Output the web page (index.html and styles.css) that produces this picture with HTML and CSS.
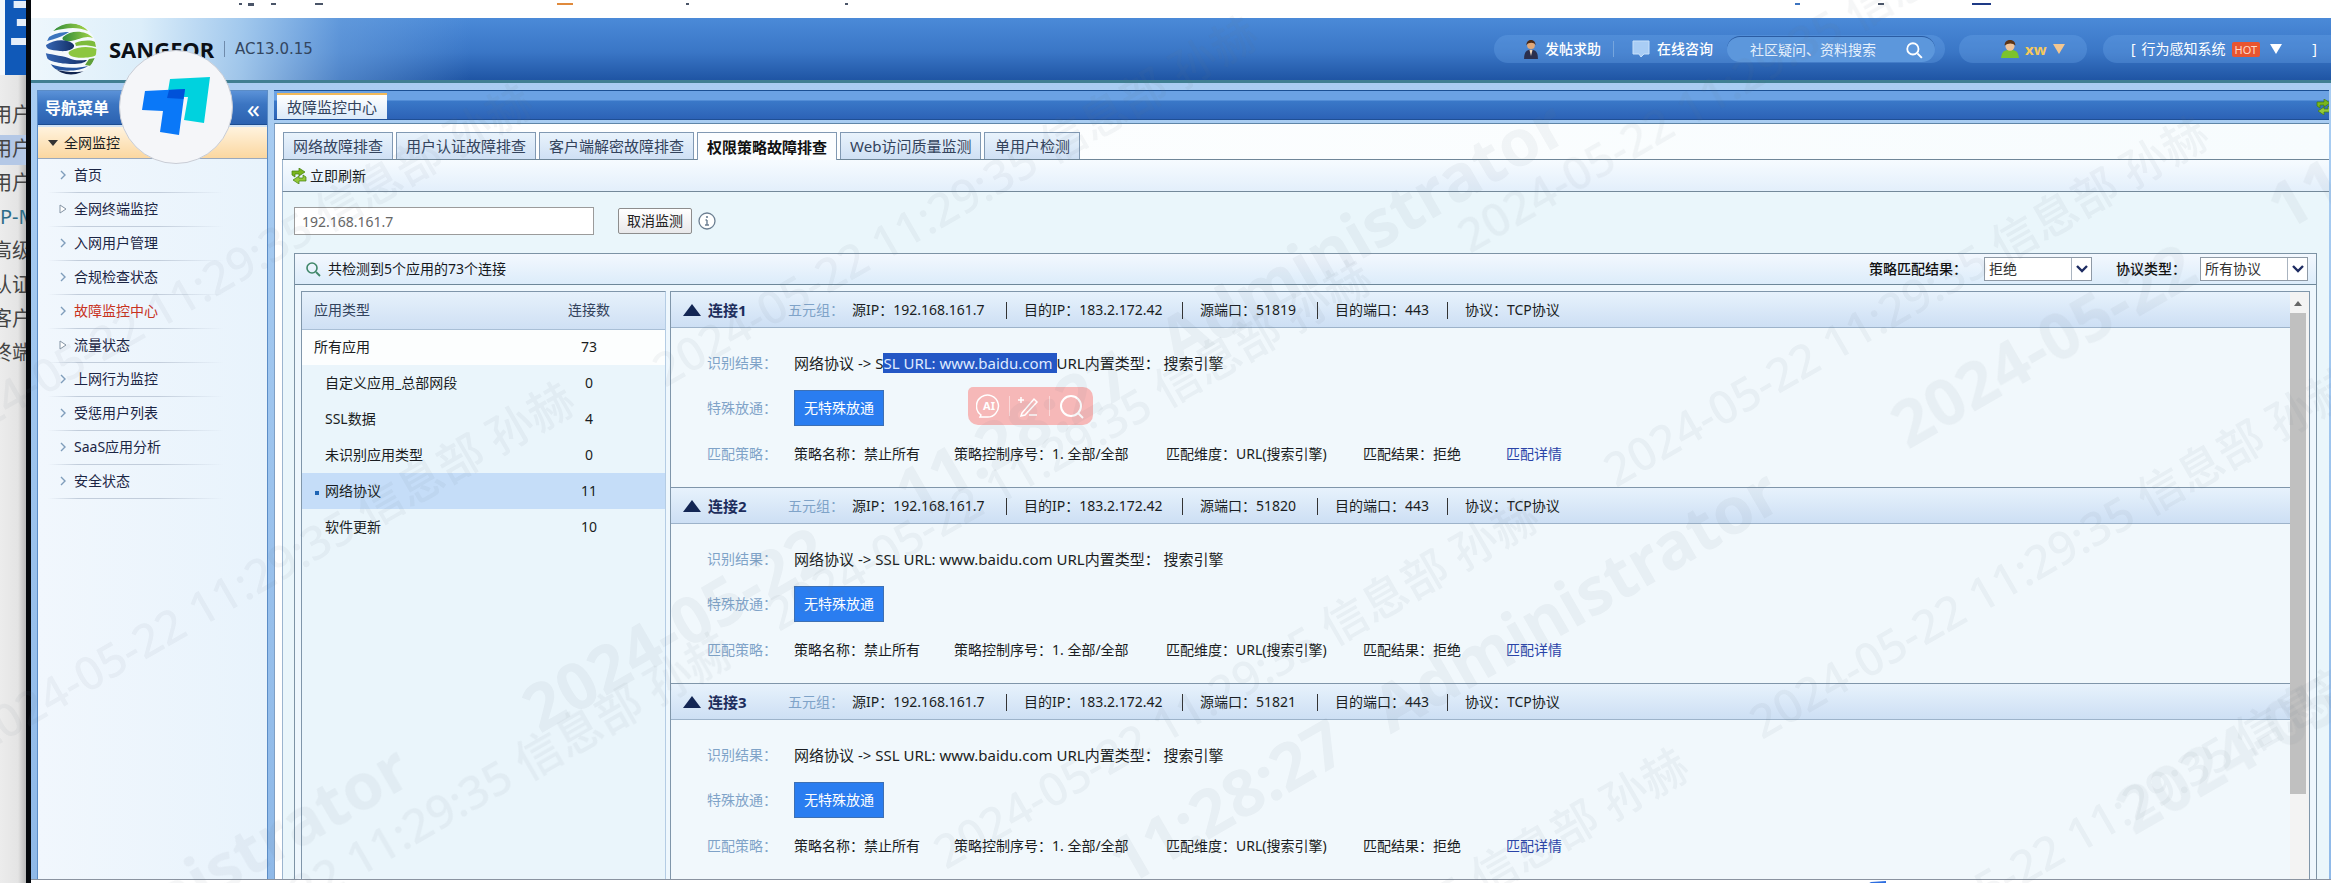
FILE: index.html
```html
<!DOCTYPE html>
<html lang="zh-CN">
<head>
<meta charset="utf-8">
<title>SANGFOR AC13.0.15</title>
<link rel="stylesheet" href="styles.css">
</head>
<body>
<svg width="0" height="0" class="defs" aria-hidden="true">
  <symbol id="i-refresh" viewBox="0 0 16 16"><path d="M1 7V3h7V0l6 4-6 4V6H4v3z" fill="#7ab51d" stroke="#3f7d0b" stroke-width=".7"/><path d="M15 9v4H8v3l-6-4 6-4v2h4V7z" fill="#94c93a" stroke="#3f7d0b" stroke-width=".7"/></symbol>
  <symbol id="i-search" viewBox="0 0 16 16"><circle cx="7" cy="7" r="5" fill="none" stroke="currentColor" stroke-width="1.6"/><path d="M11 11l4 4" stroke="currentColor" stroke-width="1.8"/></symbol>
  <symbol id="i-chev" viewBox="0 0 8 10"><path d="M2 1l4 4-4 4" fill="none" stroke="#7f9dbb" stroke-width="1.4"/></symbol>
  <symbol id="i-tri" viewBox="0 0 8 10"><path d="M1 1l6 4-6 4z" fill="#fff" stroke="#8494a4" stroke-width="1"/></symbol>
  <symbol id="i-up" viewBox="0 0 18 12"><path d="M9 0l9 12H0z" fill="#132654"/></symbol>
  <symbol id="i-down" viewBox="0 0 12 8"><path d="M1 1l5 5 5-5" fill="none" stroke="#1e2c62" stroke-width="2.4"/></symbol>
</svg>

<aside class="behind">
  <div class="behind-top">主</div>
  <ul class="behind-list">
    <li>用户</li><li class="on">用户</li><li>用户</li><li class="flush">P-M</li><li>高级</li><li>认证</li><li>客户</li><li>终端</li>
  </ul>
</aside>

<div class="app">
  <div class="strip">
    <svg width="100%" height="4" aria-hidden="true"><g fill="#4a5568"><rect x="208" width="3" height="2"/><rect x="217" width="6" height="3"/><rect x="240" width="5" height="2"/><rect x="284" width="8" height="2"/><rect x="655" width="3" height="2"/><rect x="814" width="3" height="2"/><rect x="1847" width="6" height="2"/></g><rect x="526" width="16" height="2" fill="#e08a3c"/><rect x="1764" width="5" height="2" fill="#3c74c0"/><rect x="1941" width="19" height="2" fill="#1e3a86"/></svg>
  </div>
  <header class="head">
    <svg class="globe" viewBox="0 0 52 52" role="img" aria-label="SANGFOR">
      <defs><clipPath id="gc"><circle cx="26" cy="26" r="25.500"/></clipPath>
      <linearGradient id="gg"><stop offset="0" stop-color="#2f8a3a"/><stop offset="1" stop-color="#a5d447"/></linearGradient>
      <linearGradient id="gb"><stop offset="0" stop-color="#3566b4"/><stop offset="1" stop-color="#142f66"/></linearGradient></defs>
      <g clip-path="url(#gc)"><rect width="52" height="52" fill="#f4f9fc"/>
      <path d="M8 8C18-3 34-2 43 8 32 3 20 5 8 8z" fill="url(#gg)"/>
      <path d="M4 14c10-6 20-5 20-5s-6 5-22 9z" fill="#3b74bd"/><path d="M18 14c8-7 22-7 30 1-8-3-14 2-22 3-6 1-10-1-8-4z" fill="url(#gg)"/>
      <path d="M1 22c8-6 20-6 26-2s-2 9-12 8S1 26 1 22z" fill="url(#gb)"/><path d="M30 20c8-3 16-3 20-1l1 5c-8-2-14-2-20-1z" fill="#7dbb3c"/>
      <path d="M25 28c8-5 20-5 27-2v6c-6 3-20 4-26 1-3-2-3-4-1-5z" fill="#8cc63f"/>
      <path d="M0 30c8 2 20 3 26 6 4 2 12 1 16 1-4 6-24 4-32 2S1 35 0 30z" fill="url(#gb)"/><path d="M44 36l6-1-4 8-6-1z" fill="#5fa03a"/>
      <path d="M5 41c10 4 26 5 38 2-6 5-24 6-34 3z" fill="#26559f"/><path d="M12 47c9 2 20 3 28 1-6 7-22 7-28-1z" fill="#10244f"/></g>
    </svg>
    <strong class="brand">SANGFOR</strong><span class="bar"></span><span class="ver">AC13.0.15</span>
    <nav class="tools">
      <div class="pill pill-a">
        <a href="#"><svg width="14" height="20" viewBox="0 0 18 26"><path d="M0 26c0-9 3-12 9-12s9 3 9 12z" fill="#2b2f4e"/><path d="M7 14h4l-2 8z" fill="#f1d9c0"/><circle cx="9" cy="8" r="5" fill="#e0a878"/><path d="M3 8c0-9 12-9 12 0-2-4-9-4-12 0z" fill="#4a2b1b"/></svg>发帖求助</a>
        <span class="sep"></span>
        <a href="#"><svg width="18" height="18" viewBox="0 0 18 18"><path d="M1 1h16v13h-5l-3 3-2-3H1z" fill="#a9cdf5" stroke="#c8e0fa"/></svg>在线咨询</a>
        <label class="ask"><input type="text" value="社区疑问、资料搜索" aria-label="社区搜索"><svg width="18" height="18"><use href="#i-search"/></svg></label>
      </div>
      <div class="pill pill-b"><button type="button"><svg width="18" height="18" viewBox="0 0 20 20"><path d="M0 20c1-8 4-9 10-9s9 1 10 9z" fill="#7cc32c"/><circle cx="10" cy="7" r="5" fill="#efc39a"/><path d="M4 6c0-8 12-8 12 0-3-3-8-3-12 0z" fill="#5b3418"/></svg><b>xw</b><span class="dn"></span></button></div>
      <div class="pill pill-c"><span>[</span><button type="button">行为感知系统<em>HOT</em><span class="dn white"></span></button><span>]</span></div>
    </nav>
  </header>

  <div class="work">
    <nav class="side">
      <div class="side-head">导航菜单<button type="button" aria-label="收起">«</button></div>
      <div class="side-group"><span class="caret"></span>全网监控</div>
      <ul>
        <li><a href="#"><svg><use href="#i-chev"/></svg>首页</a></li>
        <li><a href="#"><svg><use href="#i-tri"/></svg>全网终端监控</a></li>
        <li><a href="#"><svg><use href="#i-chev"/></svg>入网用户管理</a></li>
        <li><a href="#"><svg><use href="#i-chev"/></svg>合规检查状态</a></li>
        <li><a href="#" class="cur"><svg><use href="#i-chev"/></svg>故障监控中心</a></li>
        <li><a href="#"><svg><use href="#i-tri"/></svg>流量状态</a></li>
        <li><a href="#"><svg><use href="#i-chev"/></svg>上网行为监控</a></li>
        <li><a href="#"><svg><use href="#i-chev"/></svg>受惩用户列表</a></li>
        <li><a href="#"><svg><use href="#i-chev"/></svg>SaaS应用分析</a></li>
        <li><a href="#"><svg><use href="#i-chev"/></svg>安全状态</a></li>
      </ul>
    </nav>

    <main class="main">
      <div class="maintabs"><button type="button">故障监控中心</button><svg class="mini" width="16" height="16"><use href="#i-refresh"/></svg></div>
      <div class="page">
        <div class="subtabs">
          <button type="button">网络故障排查</button><button type="button">用户认证故障排查</button><button type="button">客户端解密故障排查</button><button type="button" class="on">权限策略故障排查</button><button type="button">Web访问质量监测</button><button type="button">单用户检测</button>
        </div>
        <div class="toolbar"><button type="button"><svg width="16" height="16"><use href="#i-refresh"/></svg>立即刷新</button></div>
        <div class="body">
          <div class="query">
            <input type="text" value="192.168.161.7" aria-label="IP地址">
            <button type="button">取消监测</button>
            <svg class="info" width="18" height="18" viewBox="0 0 18 18"><circle cx="9" cy="9" r="8" fill="#fff" stroke="#6c7f92" stroke-width="1.3"/><path d="M9 8v5M7.500 8H9M7 13h4" stroke="#6c7f92" stroke-width="1.400"/><circle cx="9" cy="5" r="1.100" fill="#6c7f92"/></svg>
          </div>
          <section class="panel">
            <div class="panel-head">
              <svg class="green" width="16" height="16"><use href="#i-search"/></svg><span class="sum">共检测到5个应用的73个连接</span>
              <label for="r">策略匹配结果：</label><span class="sel"><select id="r"><option>拒绝</option></select><i><svg width="12" height="8"><use href="#i-down"/></svg></i></span>
              <label for="p" class="second">协议类型：</label><span class="sel"><select id="p"><option>所有协议</option></select><i><svg width="12" height="8"><use href="#i-down"/></svg></i></span>
            </div>
            <div class="split">
              <div class="apps">
                <table>
                  <thead><tr><th>应用类型</th><th>连接数</th></tr></thead>
                  <tbody>
                    <tr class="all"><td>所有应用</td><td>73</td></tr>
                    <tr><td>自定义应用_总部网段</td><td>0</td></tr>
                    <tr><td>SSL数据</td><td>4</td></tr>
                    <tr><td>未识别应用类型</td><td>0</td></tr>
                    <tr class="on"><td>网络协议</td><td>11</td></tr>
                    <tr><td>软件更新</td><td>10</td></tr>
                  </tbody>
                </table>
              </div>
              <div class="conns">
                <div class="conn-list">
                  <article>
                    <h3><svg width="18" height="12"><use href="#i-up"/></svg><b>连接1</b><span class="k">五元组：</span><span class="f1">源IP：192.168.161.7</span><span class="f2">目的IP：183.2.172.42</span><span class="f3">源端口：51819</span><span class="f4">目的端口：443</span><span class="f5">协议：TCP协议</span></h3>
                    <dl>
                      <dt>识别结果：</dt><dd class="res">网络协议 -&gt; S<mark>SL URL: www.baidu.com </mark>URL内置类型： 搜索引擎</dd>
                      <dt>特殊放通：</dt><dd><button type="button">无特殊放通</button>
                        <span class="float"><svg width="26" height="26" viewBox="0 0 26 26" fill="none" stroke="#fff" stroke-width="1.500"><path d="M5 22a11 11 0 1 1 5 2H4z"/><text x="13" y="17" text-anchor="middle" class="ai">AI</text></svg><i></i><svg width="24" height="26" viewBox="0 0 24 26" fill="none" stroke="#fff" stroke-width="1.500"><path d="M5 20L17 6l3 3L8 22l-4 1zM4 4v6M1 7h6M12 22h8"/></svg><i></i><svg width="28" height="26" viewBox="0 0 28 26" fill="none" stroke="#fff" stroke-width="2"><circle cx="14" cy="13" r="10"/><path d="M21 20l5 5"/></svg></span></dd>
                      <dt>匹配策略：</dt><dd class="pol"><span class="p1">策略名称：禁止所有</span><span class="p2">策略控制序号：1. 全部/全部</span><span class="p3">匹配维度：URL(搜索引擎)</span><span class="p4">匹配结果：拒绝</span><a href="#">匹配详情</a></dd>
                    </dl>
                  </article>
                  <article>
                    <h3><svg width="18" height="12"><use href="#i-up"/></svg><b>连接2</b><span class="k">五元组：</span><span class="f1">源IP：192.168.161.7</span><span class="f2">目的IP：183.2.172.42</span><span class="f3">源端口：51820</span><span class="f4">目的端口：443</span><span class="f5">协议：TCP协议</span></h3>
                    <dl>
                      <dt>识别结果：</dt><dd class="res">网络协议 -&gt; SSL URL: www.baidu.com URL内置类型： 搜索引擎</dd>
                      <dt>特殊放通：</dt><dd><button type="button">无特殊放通</button></dd>
                      <dt>匹配策略：</dt><dd class="pol"><span class="p1">策略名称：禁止所有</span><span class="p2">策略控制序号：1. 全部/全部</span><span class="p3">匹配维度：URL(搜索引擎)</span><span class="p4">匹配结果：拒绝</span><a href="#">匹配详情</a></dd>
                    </dl>
                  </article>
                  <article>
                    <h3><svg width="18" height="12"><use href="#i-up"/></svg><b>连接3</b><span class="k">五元组：</span><span class="f1">源IP：192.168.161.7</span><span class="f2">目的IP：183.2.172.42</span><span class="f3">源端口：51821</span><span class="f4">目的端口：443</span><span class="f5">协议：TCP协议</span></h3>
                    <dl>
                      <dt>识别结果：</dt><dd class="res">网络协议 -&gt; SSL URL: www.baidu.com URL内置类型： 搜索引擎</dd>
                      <dt>特殊放通：</dt><dd><button type="button">无特殊放通</button></dd>
                      <dt>匹配策略：</dt><dd class="pol"><span class="p1">策略名称：禁止所有</span><span class="p2">策略控制序号：1. 全部/全部</span><span class="p3">匹配维度：URL(搜索引擎)</span><span class="p4">匹配结果：拒绝</span><a href="#">匹配详情</a></dd>
                    </dl>
                  </article>
                </div>
                <div class="scroll"><span class="s-up"></span><span class="thumb"></span></div>
              </div>
            </div>
          </section>
        </div>
      </div>
    </main>
  </div>
  <footer class="foot"><svg width="20" height="4" viewBox="0 0 20 4"><path d="M0 4l5-3 15-1v4z" fill="#2f6fe0"/></svg></footer>
</div>

<div class="badge"><svg width="68" height="60" viewBox="0 0 68 60"><path d="M28 2L68 0 62 46 42 43 46 20 25 20z" fill="#00d2de"/><path d="M3 14L43 12 37 58 18 55 21 34 0 33z" fill="#0a78f8"/><path d="M27 13L43 12 41.500 22 25 21z" fill="#0052d9"/></svg></div>

<svg class="marks" aria-hidden="true">
  <g class="big">
    <text transform="translate(1908 450) rotate(-30)">2024-05-22<tspan x="435">11:28:27</tspan></text>
    <text transform="translate(540 734) rotate(-30)">2024-05-22<tspan x="430">11:28:27</tspan><tspan x="735">Administrator</tspan></text>
    <text transform="translate(2134 836) rotate(-30)">2024-05-22</text>
    <text transform="translate(754 1102) rotate(-30)">2024-05-22<tspan x="430">11:28:27</tspan><tspan x="735">Administrator</tspan></text>
    <text transform="translate(20 1010) rotate(-30)">Administrator</text>
  </g>
  <g class="small">
    <text transform="translate(-60 456) rotate(-30)">2024-05-22 11:29:35 信息部 孙赫</text>
    <text transform="translate(-18 754) rotate(-30)">2024-05-22 11:29:35 信息部 孙赫</text>
    <text transform="translate(665 388) rotate(-30)">2024-05-22 11:29:35 信息部 孙赫</text>
    <text transform="translate(1616 488) rotate(-30)">2024-05-22 11:29:35 信息部 孙赫</text>
    <text transform="translate(140 1004) rotate(-30)">2024-05-22 11:29:35 信息部 孙赫</text>
    <text transform="translate(779 632) rotate(-30)">2024-05-22 11:29:35 信息部 孙赫</text>
    <text transform="translate(946 870) rotate(-30)">2024-05-22 11:29:35 信息部 孙赫</text>
    <text transform="translate(1762 740) rotate(-30)">2024-05-22 11:29:35 信息部 孙赫</text>
    <text transform="translate(1860 980) rotate(-30)">2024-05-22 11:29:35 信息部 孙赫</text>
    <text transform="translate(1096 1120) rotate(-30)">2024-05-22 11:29:35 信息部 孙赫</text>
    <text transform="translate(1470 254) rotate(-30)">2024-05-22 11:29:35 信息部 孙赫</text>
  </g>
</svg>
</body>
</html>
```
FILE: styles.css
```css
* { box-sizing: border-box; }
body {
  margin: 0; height: 100vh; overflow: hidden; display: flex; position: relative;
  font: 14px/20px "Noto Sans", "Noto Sans CJK SC", sans-serif; color: #1a1d22; background: #fff;
}
button, input, select { font: inherit; color: inherit; margin: 0; }
button { cursor: pointer; background: none; border: 0; padding: 0; }
ul, dl, dd, h3 { margin: 0; padding: 0; list-style: none; font-weight: 400; font-size: inherit; }
a { color: inherit; text-decoration: none; }
.defs { position: absolute; }

.behind { width: 26px; flex: none; overflow: hidden; background: linear-gradient(90deg, #ececec 0, #e4e4e4 18px, #b9b9b9 26px); font-size: 20px; color: #444; }
.behind-top { height: 75px; background: linear-gradient(90deg, #f4f8fc 0 5px, #1059b8 5px); color: #e4eefa; font: 700 60px/30px "Noto Sans CJK SC", sans-serif; text-indent: 8px; white-space: nowrap; overflow: hidden; }
.behind-list { padding-top: 24px; }
.behind-list li { height: 34px; line-height: 32px; text-indent: -8px; white-space: nowrap; overflow: hidden; }
.behind-list .on { background: #b4c8e6; height: 30px; margin: 2px 0; line-height: 28px; }
.behind-list .flush { text-indent: 0; color: #2e6d88; }

.app { flex: 1; min-width: 0; display: flex; flex-direction: column; border-left: 5px solid #05080d; background: #9fc6ee; }
.strip { height: 18px; flex: none; background: #fff; line-height: 4px; }
.head {
  height: 65px; flex: none; display: flex; align-items: center; padding-left: 14px; border-bottom: 3px solid #3f7f92;
  background: linear-gradient(90deg, #eef7fc 0, #dceefa 110px, rgba(172,208,240,.9) 210px, rgba(110,162,222,.6) 310px, rgba(60,120,200,0) 440px), linear-gradient(#4b8ad8, #3a76c6 55%, #1f55a4);
}
.globe { width: 52px; height: 52px; flex: none; }
.brand { margin-left: 12px; font: 700 22px/30px "Noto Sans", sans-serif; color: #0b0f16; }
.bar { width: 1px; height: 16px; flex: none; background: #6f8bab; margin: 0 10px; }
.ver { font: 15px/20px "DejaVu Sans", sans-serif; color: #33465f; }
.tools { margin-left: auto; display: flex; color: #fff; align-items: center; line-height: 26px; }
.pill { height: 28px; border-radius: 14px; background: rgba(120,175,240,.28); display: flex; align-items: center; }
.pill-a { padding: 0 10px 0 30px; margin-right: 14px; }
.pill-a a { display: flex; align-items: center; gap: 7px; font-weight: 500; }
.sep { width: 1px; height: 16px; background: #76a5dd; margin: 0 18px 0 12px; }
.ask { display: flex; align-items: center; width: 208px; height: 26px; margin-left: 14px; border-radius: 13px; background: #5c97dc; border-top: 1px solid #2a5ca3; padding: 0 12px 0 23px; }
.ask input { flex: 1; min-width: 0; border: 0; background: none; padding: 0; height: 24px; color: #e6f1fc; }
.pill-b { padding: 0 20px 0 42px; margin-right: 16px; width: 128px; color: #f6c95c; }
.pill button { display: flex; align-items: center; gap: 6px; }
.pill-b b { font-size: 15px; }
.dn { width: 0; height: 0; border: 6px solid transparent; border-top: 10px solid #f3c690; border-bottom: 0; }
.dn.white { border-top-color: #fff; margin: 0 24px 0 4px; }
.pill-c { padding: 0 14px 0 28px; gap: 6px; border-radius: 14px 0 0 14px; width: 228px; }
.pill-c em { background: #e9552f; color: #ffd9c8; font: 11px/15px "Noto Sans", sans-serif; padding: 0 3px; border-radius: 2px; }

.work { flex: 1; min-height: 0; display: flex; padding: 7px 2px 0 6px; background: linear-gradient(#a9cdf2, #8fb9e8); }
.side { width: 231px; flex: none; margin-right: 6px; border: 1px solid #5b8cc6; background: linear-gradient(90deg, #f1f7fd, #e8f3fc); border-bottom: 0; }
.side-head { height: 34px; padding: 0 7px; display: flex; justify-content: space-between; align-items: center; color: #fff; font-weight: 700; font-size: 16px; background: linear-gradient(#5b92d8, #3b75c2 40%, #2c62b0); border-bottom: 1px solid #1d4d91; }
.side-head button { font-size: 26px; font-weight: 400; line-height: 24px; }
.side-group { height: 34px; display: flex; align-items: center; gap: 6px; padding-left: 10px; background: linear-gradient(#fff3de, #fbd7a0); border-bottom: 1px solid #9aa9bd; border-top: 2px solid #cfe2f6; }
.caret { border: 5px solid transparent; border-top: 6px solid #333; border-bottom: 0; }
.side li { height: 34px; padding-left: 21px; background: linear-gradient(90deg, transparent 10px, #c2cddb 40px, #c2cddb 120px, transparent 186px) bottom / 100% 1px no-repeat; }
.side a { display: flex; align-items: center; gap: 7px; height: 32px; color: #1b2544; }
.side li svg { width: 8px; height: 10px; }
.side .cur { color: #c8321e; }

.main { flex: 1; min-width: 0; display: flex; flex-direction: column; }
.maintabs { height: 30px; flex: none; display: flex; align-items: flex-end; justify-content: space-between; padding-left: 3px; border-top: 1px solid #1b4f93; border-bottom: 1px solid #1f4f95; background: linear-gradient(#6ba2e4 0 9px, #3a78c8 10px, #2c62b6); overflow: hidden; }
.maintabs button { height: 26px; padding: 0 10px; background: linear-gradient(#fff, #dbeaf9); border-top: 2px solid #f2b95a; color: #33435c; font-size: 15px; }
.mini { margin: 0 -3px 4px 0; }
.page { flex: 1; min-height: 0; display: flex; flex-direction: column; margin-top: 3px; border-top: 1px solid #5f86a8; background: linear-gradient(90deg, #fff, #f7fcfe); padding: 8px 0 0 7px; border-left: 1px solid #7f9fc4; }
.subtabs { display: flex; gap: 3px; padding-left: 1px; height: 28px; flex: none; border-bottom: 1px solid #6f8698; }
.subtabs button { height: 27px; padding: 0 9px; min-width: 96px; border: 1px solid #8199b3; border-bottom: 0; background: linear-gradient(#e9f3fc, #cfe0f4); color: #33435c; font-size: 15px; line-height: 24px; }
.subtabs .on { height: 28px; background: #fbfdff; color: #111; font-weight: 700; }
.toolbar { height: 32px; flex: none; display: flex; align-items: center; padding-left: 8px; background: linear-gradient(#f6fbff, #e3effb); border-bottom: 1px solid #74899a; border-left: 1px solid #9cb5cf; }
.toolbar button { display: flex; align-items: center; gap: 3px; }
.body { flex: 1; min-height: 0; display: flex; flex-direction: column; background: #eaf6fb; border-left: 1px solid #9cb5cf; padding: 15px 12px 0 11px; }
.query { display: flex; align-items: center; height: 28px; flex: none; }
.query input { width: 300px; height: 28px; border: 1px solid #9b9b9b; background: #fff; padding: 0 7px; color: #666; }
.query button { width: 74px; height: 26px; margin: 0 6px 0 24px; border: 1px solid #8d8d8d; border-radius: 2px; background: linear-gradient(#fff, #e8e8ea); color: #222; }

.panel { flex: 1; min-height: 0; display: flex; flex-direction: column; margin-top: 18px; border: 1px solid #7d93a5; border-bottom: 0; }
.panel-head { height: 31px; flex: none; display: flex; align-items: center; padding: 0 8px 0 10px; background: linear-gradient(#f3f8fe, #dcecfa); border-bottom: 1px solid #6d8799; }
.green { color: #3f8668; margin-right: 7px; }
.sum { color: #15181c; margin-right: auto; }
.panel-head label { width: 115px; font-size: 14px; font-weight: 500; color: #111; }
.panel-head .second { width: 84px; margin-left: 24px; }
.sel { position: relative; display: flex; width: 108px; height: 24px; }
.sel select { appearance: none; width: 100%; border: 1px solid #8f9aa6; border-radius: 0; background: #fff; padding: 0 4px; color: #333; }
.sel i { position: absolute; right: 1px; top: 1px; bottom: 1px; width: 20px; border-left: 1px solid #aab4c0; display: grid; place-items: center; pointer-events: none; }
.split { flex: 1; min-height: 0; display: flex; gap: 4px; padding: 6px 6px 0 6px; background: #eef7fd; }
.apps { width: 365px; flex: none; border: 1px solid #8096aa; border-bottom: 0; background: #eaf5fb; border-right-color: #b4cce4; }
table { width: 100%; border-collapse: collapse; table-layout: fixed; }
th, td { height: 36px; padding: 0 0 0 23px; text-align: left; font-weight: 400; }
th { height: 37px; padding-left: 12px; background: linear-gradient(#e6f1fb, #cfe0f4); border-bottom: 1px solid #a9bfd6; color: #33435c; }
th:last-child, td:last-child { width: 152px; text-align: center; padding: 0; }
.all td:first-child { padding-left: 12px; }
.all td { background: #fcfefe; }
td { position: relative; }
.on td { background: #c5ddf8; }
.on td:first-child::before { content: ""; position: absolute; left: 13px; top: 18px; width: 4px; height: 4px; background: #1e64b4; }
.conns { flex: 1; min-width: 0; display: flex; border: 1px solid #8096aa; border-bottom: 0; background: #f1f8fc; }
.conn-list { flex: 1; min-width: 0; overflow: hidden; }
article { height: 196px; border-bottom: 1px solid #8096aa; }
h3 { height: 36px; display: flex; align-items: center; padding-left: 12px; background: linear-gradient(#e7f2fc, #cddff4); border-bottom: 1px solid #9db3ca; white-space: nowrap; }
h3 b { width: 80px; margin-left: 7px; font-size: 15px; color: #1d2d5c; }
.k { width: 64px; color: #7fa3c8; }
.f1, .f2, .f3, .f4 { position: relative; }
.f1 { width: 172px; } .f2 { width: 176px; } .f3 { width: 135px; } .f4 { width: 130px; }
.f1::after, .f2::after, .f3::after, .f4::after { content: ""; position: absolute; right: 17px; top: 2px; width: 1px; height: 17px; background: #333; }
dl { display: grid; grid-template-columns: 87px 1fr; grid-template-rows: 36px 54px 38px; align-items: center; padding: 17px 0 0 36px; white-space: nowrap; }
dt { color: #7fa3c8; }
dd { position: relative; }
.res { font-size: 15px; }
mark { background: #2457c5; color: #dfeaff; }
dd button { width: 90px; height: 36px; background: #2a7df0; border: 1px solid #3d70b4; color: #fff; display: block; }
.float { position: absolute; left: 174px; top: -3px; width: 125px; height: 38px; border-radius: 5px 10px 10px 10px; background: #f6b8b8; display: flex; align-items: center; justify-content: space-around; padding: 0 4px; }
.float i { width: 1px; height: 20px; background: #fbdada; }
.ai { font: 700 11px "Noto Sans", sans-serif; fill: #fff; stroke: none; }
.pol { display: flex; }
.p1 { width: 160px; } .p2 { width: 212px; } .p3 { width: 197px; } .p4 { width: 143px; }
.pol a { color: #2a44a8; }
.scroll { width: 19px; display: flex; flex-direction: column; align-items: flex-start; background: #f3f3f3; }
.s-up { border: 4px solid transparent; border-bottom: 5px solid #666; border-top: 0; margin: 9px 0 7px 4px; }
.thumb { width: 16px; flex: 0 1 481px; background: #c0c0c0; }
.foot { height: 4px; flex: none; background: #fff; border-top: 1px solid #8a93a0; padding-left: 79.8%; line-height: 0; overflow: hidden; }

.badge { position: absolute; left: 119px; top: 50px; width: 114px; height: 114px; border-radius: 50%; background: #f5f6f9; border: 1px solid #c9cdd6; display: grid; place-items: center; }
.marks { position: absolute; inset: 0; width: 100%; height: 100%; pointer-events: none; fill: #6b7580; }
.big { font: 700 65px "Noto Sans", sans-serif; opacity: .07; }
.small { font: 500 46px "Noto Sans", "Noto Sans CJK SC", sans-serif; opacity: .07; }
```
